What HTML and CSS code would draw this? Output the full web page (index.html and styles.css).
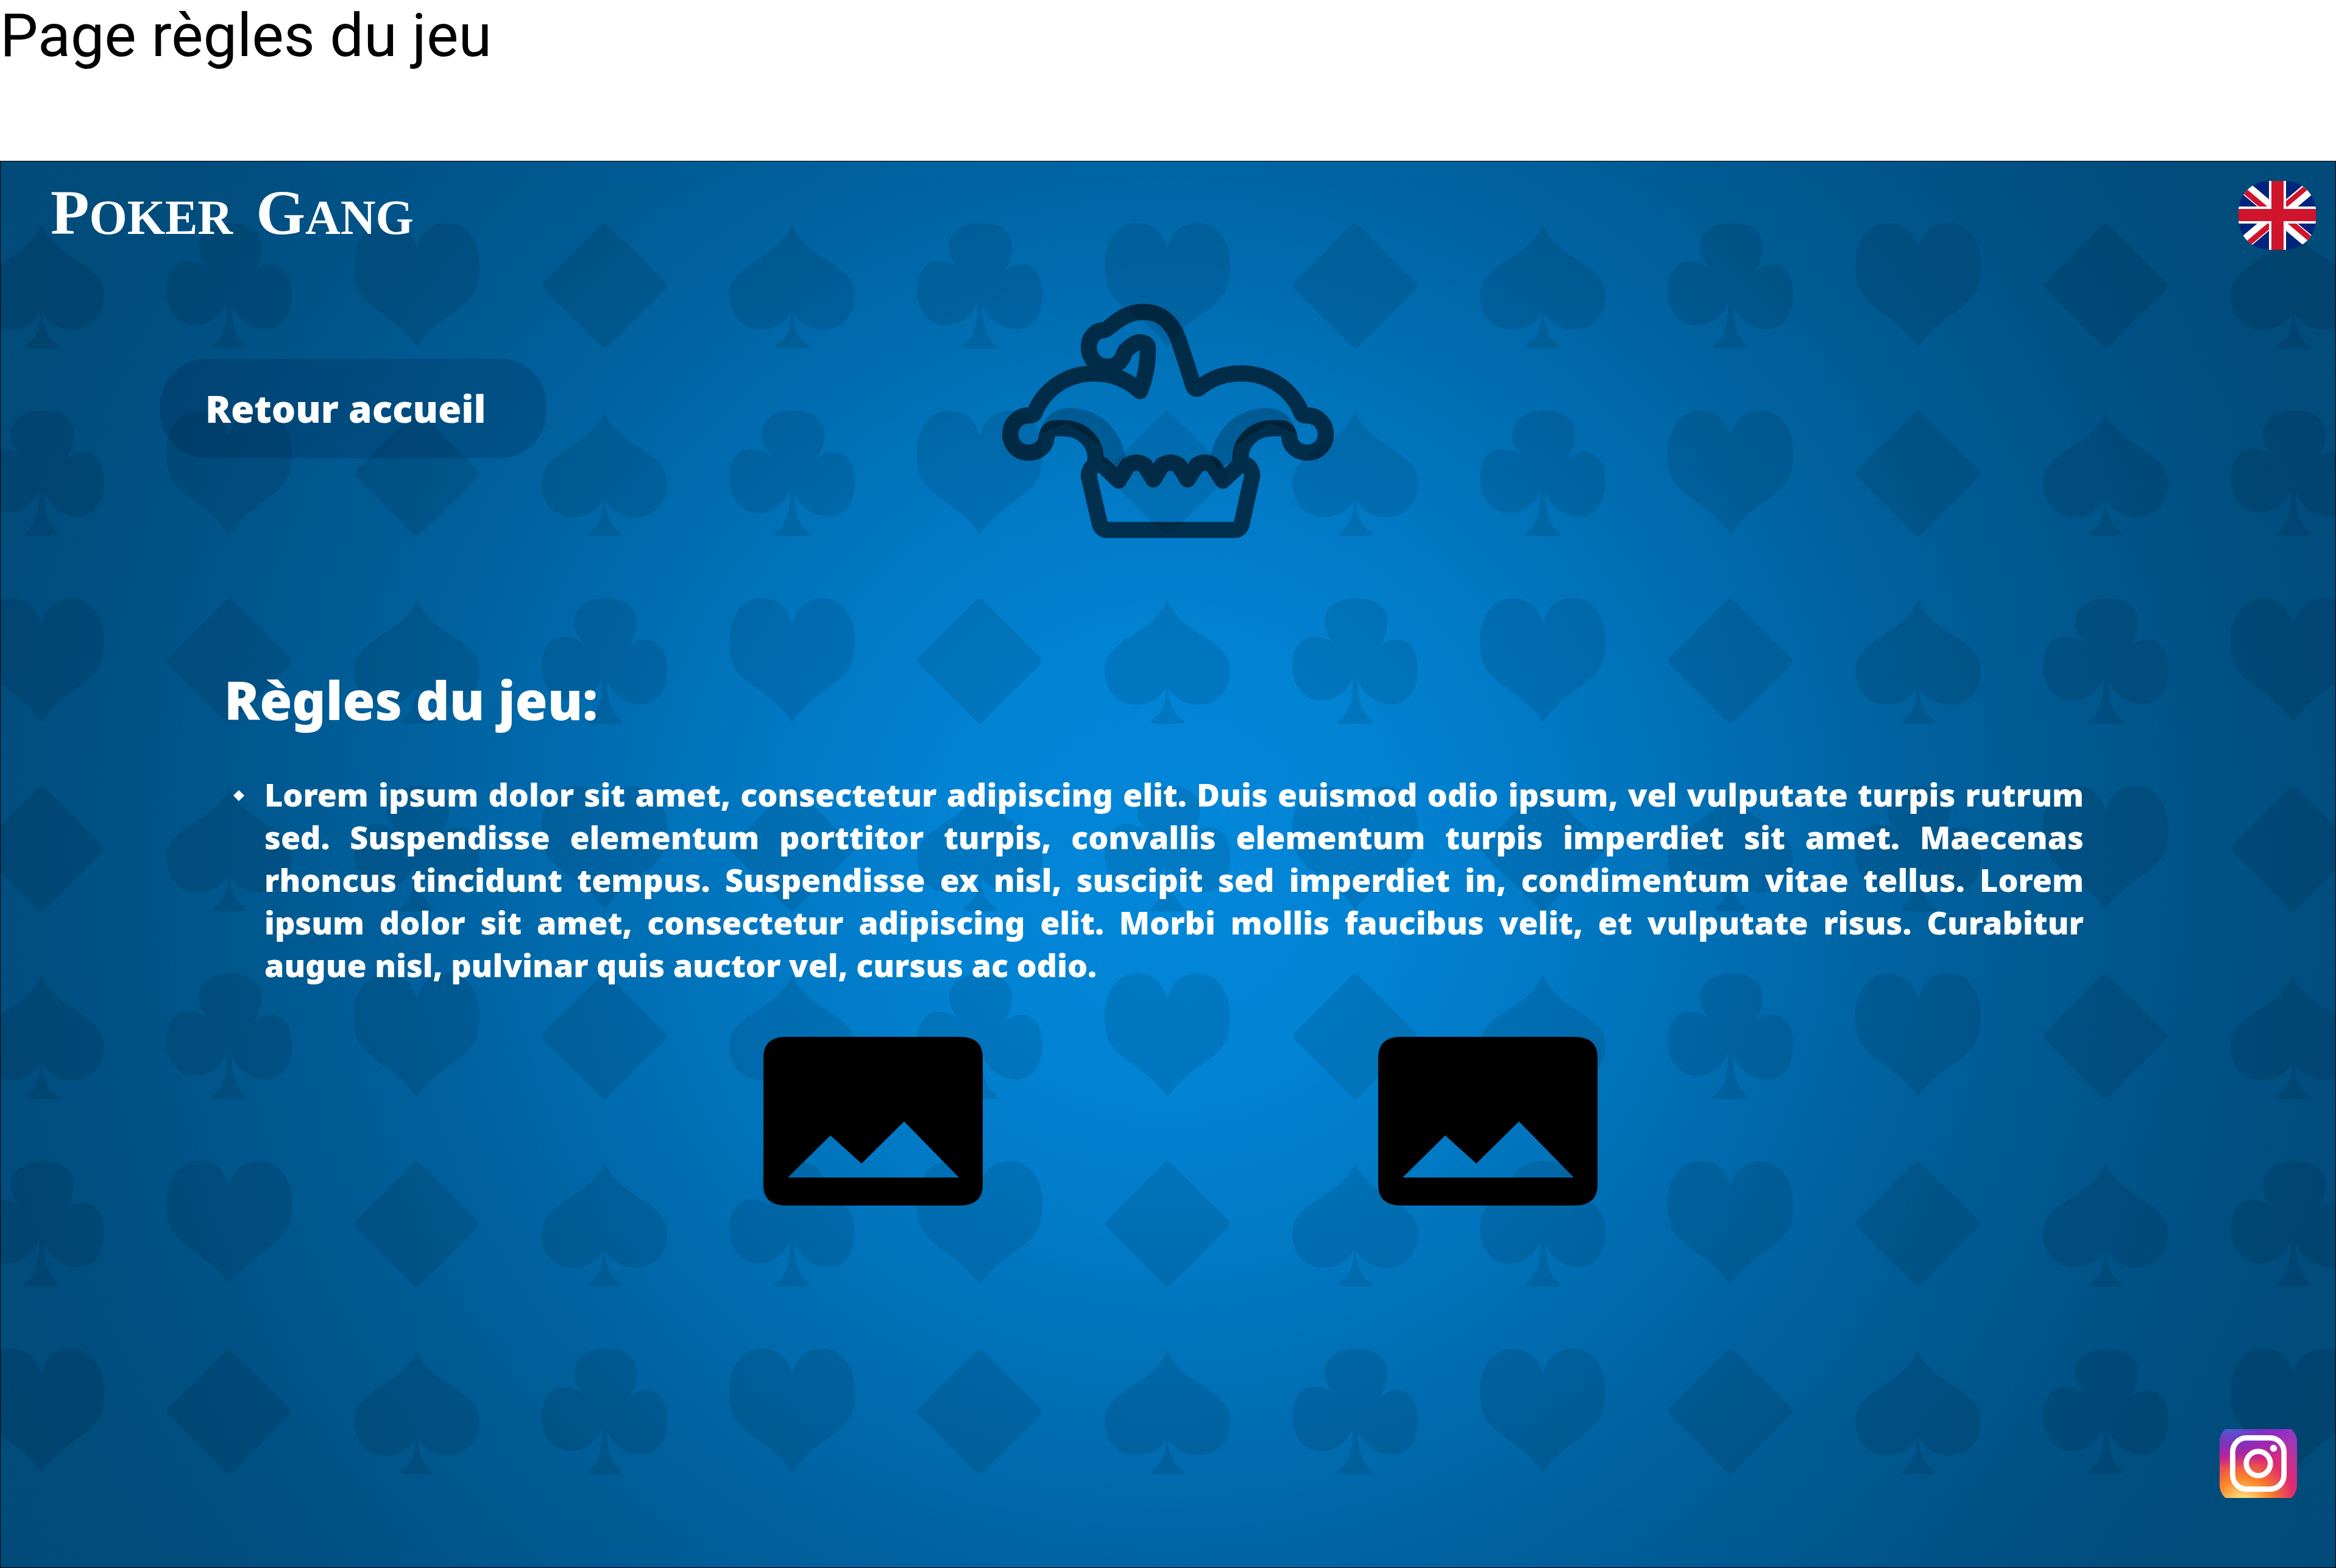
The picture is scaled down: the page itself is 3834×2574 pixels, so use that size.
FILE: index.html
```html
<!DOCTYPE html>
<html lang="fr">
<head>
<meta charset="utf-8">
<meta name="viewport" content="width=device-width, initial-scale=1">
<title>Poker Gang – Règles du jeu</title>
<link rel="stylesheet" href="styles.css">
</head>
<body>
<h1 class="page-title">Page règles du jeu</h1>

<div class="screen">
  <svg class="suits" aria-hidden="true">
    <defs>
      <path id="spade" d="M103 3C92 28 74 42 56 54C28 72 0 88 0 118C0 153 22 175 52 175C74 175 94 163 101 146C101 172 95 190 78 199C74 203 78 206 86 206H124C132 206 134 203 128 199C112 190 106 172 104 146C112 163 132 175 154 175C184 175 206 153 206 118C206 88 178 72 150 54C132 42 114 28 103 3Z"/>
      <path id="club" d="M105 0C135 0 156 14 156 38C156 56 150 70 142 82C150 72 160 68 172 68C192 68 206 86 206 118C206 152 188 174 164 174C138 174 116 158 107 134C108 168 114 188 130 200C134 204 130 206 124 206H82C74 206 72 204 77 200C94 188 100 166 99 130C92 154 70 168 46 168C20 168 0 144 0 112C0 82 14 63 35 63C50 63 62 68 71 76C60 64 53 56 53 38C53 14 76 0 105 0Z"/>
      <path id="heart" d="M103 42C96 14 78 0 53 0C20 0 0 32 0 68C0 96 4 112 20 128C34 142 46 148 64 162C82 176 94 190 103 203C112 190 124 176 142 162C160 148 172 142 186 128C202 112 206 96 206 68C206 32 186 0 153 0C128 0 110 14 103 42Z"/>
      <path id="diamond" d="M98 3Q103-2 108 3L202 97Q208 103 202 109L108 203Q103 208 98 203L4 109Q-2 103 4 97Z"/>
      <pattern id="suit-grid" patternUnits="userSpaceOnUse" x="-87" y="50" width="1232" height="1232">
        <use href="#spade" x="51" y="51"/><use href="#club" x="359" y="51"/><use href="#heart" x="667" y="51"/><use href="#diamond" x="975" y="51"/>
        <use href="#club" x="51" y="359"/><use href="#heart" x="359" y="359"/><use href="#diamond" x="667" y="359"/><use href="#spade" x="975" y="359"/>
        <use href="#heart" x="51" y="667"/><use href="#diamond" x="359" y="667"/><use href="#spade" x="667" y="667"/><use href="#club" x="975" y="667"/>
        <use href="#diamond" x="51" y="975"/><use href="#spade" x="359" y="975"/><use href="#club" x="667" y="975"/><use href="#heart" x="975" y="975"/>
      </pattern>
    </defs>
    <rect y="50" width="100%" height="2156" fill="url(#suit-grid)"/>
  </svg>

  <header class="topbar">
    <a class="logo" href="#"><span><span class="cap">P</span>OKER</span> <span><span class="cap">G</span>ANG</span></a>
    <button class="lang" type="button" aria-label="English">
      <svg viewBox="-64 -56 127 113" aria-hidden="true">
        <rect x="-64" y="-57" width="128" height="114" fill="#00247d"/>
        <path fill="#fff" d="M-70-73L70 45V73L-70-45ZM70-73L-70 45V73L70-45Z"/>
        <path fill="#cf142b" d="M0 0L-70-59V-47L0 12ZM0 0L70 59V47L0-12ZM0 0L70-59V-70L0-11ZM0 0L-70 59V71L0 12Z"/>
        <path fill="#fff" d="M-14-57H14V-14H64V14H14V57H-14V14H-64V-14H-14Z"/>
        <path fill="#cf142b" d="M-10-57H10V-10H64V10H10V57H-10V10H-64V-10H-10Z"/>
      </svg>
    </button>
  </header>

  <div class="hero">
    <a class="back" href="#">Retour accueil</a>
    <svg class="jester" viewBox="44 38 546 386" role="img" aria-label="Joker">
      <g opacity=".22">
        <path id="shade" d="M107 252C112 224 130 210 156 210C205 210 240 245 247 290L234 310L209 296L205 270L150 235Z"/>
        <use href="#shade" transform="translate(634) scale(-1 1)"/>
      </g>
      <g fill="none" stroke="#000" stroke-width="26.500" stroke-linejoin="round" opacity=".61">
        <path d="M198 300V292C198 264 175 243 145 243H133C124 243 119 248 118 257C117 272 105 283 88 283C71 283 58 270 58 253C58 236 71 222 88 222C93 222 96 222 98 218C113 180 150 153 196 153C224 153 250 163 271 182C280 160 284 138 284 112C284 104 278 102 270 102C262 102 254 110 249 114C244 118 246 120 243 126C238 136 229 142 218 142C200 142 187 128 187 110C187 95 197 82 212 82C222 80 240 52 277 52C306 52 325 70 335 100C345 130 354 158 358 172C361 180 366 180 372 174C390 160 411 153 437 153C484 153 521 180 536 218C538 222 541 222 546 222C563 222 576 236 576 253C576 270 563 283 546 283C529 283 517 272 516 257C515 248 510 243 501 243H489C459 243 436 264 436 292V300M236 329L210 304C203 297 187 305 187 322L205 400Q208 410 217 410H427Q435 410 438 400L455 322C456 306 441 297 434 304L407 329L391 304Q377 295 364 304L349 327L335 304Q321 295 307 304L293 327L279 304Q265 295 251 304Z"/>
      </g>
    </svg>
  </div>

  <main class="rules">
    <h2 class="rules-title">Règles du jeu:</h2>
    <ul class="rules-list">
      <li>Lorem ipsum dolor sit amet, consectetur adipiscing elit. Duis euismod odio ipsum, vel vulputate turpis rutrum sed. Suspendisse elementum porttitor turpis, convallis elementum turpis imperdiet sit amet. Maecenas rhoncus tincidunt tempus. Suspendisse ex nisl, suscipit sed imperdiet in, condimentum vitae tellus. Lorem ipsum dolor sit amet, consectetur adipiscing elit. Morbi mollis faucibus velit, et vulputate risus. Curabitur augue nisl, pulvinar quis auctor vel, cursus ac odio.</li>
    </ul>
  </main>

  <div class="pictures">
    <svg class="picture" viewBox="0 0 360 277" role="img" aria-label="Illustration 1">
      <path fill-rule="evenodd" d="M38 0H322Q360 0 360 34V243Q360 277 322 277H38Q0 277 0 243V34Q0 0 38 0ZM40 231H321L231 139L161 208L110 162Z"/>
    </svg>
    <svg class="picture" viewBox="0 0 360 277" role="img" aria-label="Illustration 2">
      <path fill-rule="evenodd" d="M38 0H322Q360 0 360 34V243Q360 277 322 277H38Q0 277 0 243V34Q0 0 38 0ZM40 231H321L231 139L161 208L110 162Z"/>
    </svg>
  </div>

  <footer class="footer">
    <a class="instagram" href="#" aria-label="Instagram">
      <svg viewBox="0 7 127 113" aria-hidden="true">
        <defs>
          <radialGradient id="ig-base" gradientUnits="userSpaceOnUse" cx="38" cy="134" r="140">
            <stop offset="0" stop-color="#fd6"/><stop offset=".1" stop-color="#fd7"/><stop offset=".34" stop-color="#fc8228"/><stop offset=".62" stop-color="#e02a6e"/><stop offset="1" stop-color="#9a38bd"/>
          </radialGradient>
          <radialGradient id="ig-cool" gradientUnits="userSpaceOnUse" cx="0" cy="0" r="70" gradientTransform="translate(14 0) rotate(8) scale(1.500 1)">
            <stop offset="0" stop-color="#4068d8"/><stop offset=".3" stop-color="#6244c8" stop-opacity=".9"/><stop offset="1" stop-color="#60f" stop-opacity="0"/>
          </radialGradient>
        </defs>
        <rect width="127" height="127" rx="28" fill="url(#ig-base)"/>
        <rect width="127" height="127" rx="28" fill="url(#ig-cool)"/>
        <g fill="none" stroke="#fff" stroke-width="8.700">
          <rect x="21.400" y="21.400" width="84.200" height="84.200" rx="23"/>
          <circle cx="63.500" cy="63.500" r="19.800"/>
        </g>
        <circle cx="88.500" cy="38.500" r="5.700" fill="#fff"/>
      </svg>
    </a>
  </footer>
</div>
</body>
</html>
```
FILE: styles.css
```css
* {
  box-sizing: border-box;
}

body {
  display: flex;
  flex-direction: column;
  min-height: 100vh;
  margin: 0;
  background: #fff;
  color: #000;
  font-family: "Noto Sans", "Open Sans", sans-serif;
}

.page-title {
  margin: 0;
  padding-bottom: 148px;
  font: 400 99px/116px Roboto, sans-serif;
}

.screen {
  position: relative;
  flex: 1;
  display: flex;
  flex-direction: column;
  overflow: hidden;
  border: 1px solid #000;
  color: #fff;
  background: radial-gradient(circle farthest-corner at center,
    #0287da 0%, #0283d4 16%, #017ac6 28%, #006fb4 40%, #0064a3 52%,
    #005b94 63%, #005083 80%, #004c7b 90%, #004b79 100%);
}

.suits {
  position: absolute;
  top: 0;
  left: 0;
  width: 100%;
  height: 100%;
  opacity: .09;
}

.topbar,
.hero,
.rules,
.pictures,
.footer {
  position: relative;
}

.topbar {
  display: flex;
  justify-content: space-between;
  align-items: flex-start;
  padding: 32px 32px 0 82px;
}

.logo {
  display: flex;
  gap: 38px;
  color: #fff;
  font: 700 80px/104px "Liberation Serif", serif;
  text-decoration: none;
}

.logo .cap {
  font-size: 104px;
}

.lang {
  width: 127px;
  height: 113px;
  padding: 0;
  border: 0;
  border-radius: 50px;
  background: none;
  overflow: hidden;
}

.lang svg,
.instagram svg {
  display: block;
  width: 127px;
  height: 113px;
}

.hero {
  display: grid;
  grid-template-columns: 1fr auto 1fr;
  align-items: start;
  margin-top: 88px;
  padding: 0 262px;
}

.back {
  justify-self: start;
  width: 634px;
  margin-top: 91px;
  padding-left: 74px;
  border-radius: 76px;
  background: rgba(0, 0, 30, .14);
  color: #fff;
  font-size: 62px;
  font-weight: 900;
  line-height: 163px;
  text-decoration: none;
}

.jester {
  display: block;
  width: 546px;
  height: 386px;
}

.rules {
  margin-top: 206px;
  padding: 0 413px 0 367px;
}

.rules-title {
  margin: 0;
  font-size: 86px;
  font-weight: 900;
  line-height: 118px;
}

.rules-list {
  margin: 61px 0 0;
  padding: 0;
  list-style: none;
  font-size: 52px;
  font-weight: 900;
  line-height: 70px;
}

.rules-list li {
  display: grid;
  grid-template-columns: 18px 1fr;
  gap: 33px;
  margin-left: 15px;
  text-align: justify;
}

.rules-list li::before {
  content: "";
  height: 18px;
  margin-top: 28px;
  background: #fff;
  clip-path: polygon(50% 0, 100% 50%, 50% 100%, 0 50%);
}

.pictures {
  display: flex;
  justify-content: center;
  gap: 649px;
  margin-top: 83px;
  padding-left: 40px;
}

.picture {
  width: 360px;
  height: 277px;
}

.footer {
  display: flex;
  justify-content: flex-end;
  margin-top: auto;
  padding: 0 63px 114px;
}
```
